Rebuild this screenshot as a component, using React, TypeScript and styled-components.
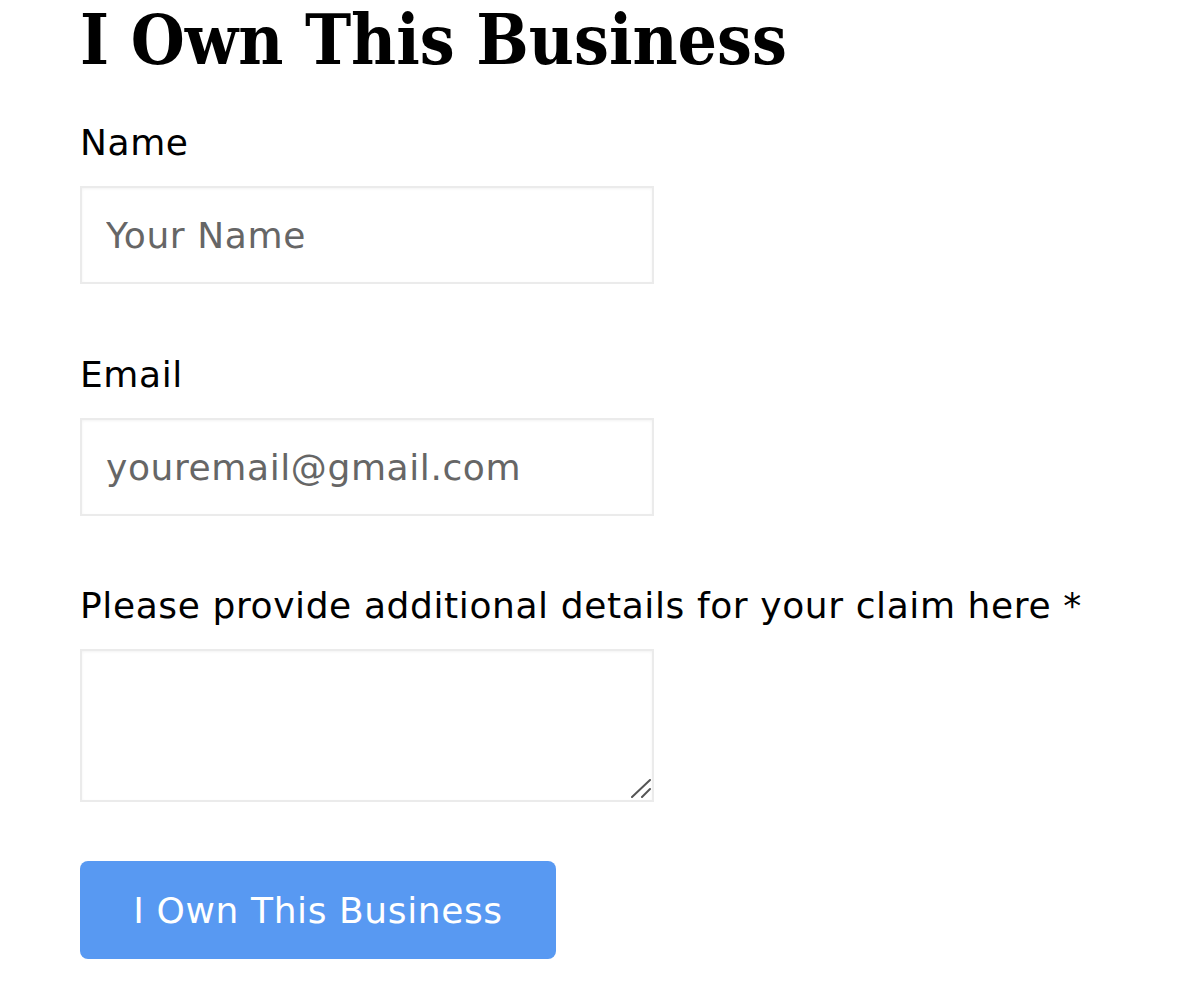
import React from 'react';
import styled, { createGlobalStyle } from 'styled-components';

const GlobalStyle = createGlobalStyle`
  body {
    margin: 0;
    background: #ffffff;
  }
`;

const bodyFont = `'DejaVu Sans', 'Noto Sans', sans-serif`;

const Page = styled.div`
  padding: 0 80px 40px;
  font-family: ${bodyFont};
  color: #000;
`;

const Title = styled.h1`
  margin: 0 0 39px;
  font-family: 'DejaVu Serif Condensed', 'Liberation Serif', serif;
  font-weight: 700;
  font-size: 69px;
  line-height: 80px;
`;

const Form = styled.form`
  display: flex;
  flex-direction: column;
  align-items: flex-start;
`;

const Field = styled.div<{ $gap?: number }>`
  display: flex;
  flex-direction: column;
  margin-bottom: ${(p) => p.$gap ?? 67}px;
`;

const Label = styled.label`
  font-size: 36px;
  line-height: 48px;
  letter-spacing: 0.6px;
  margin-bottom: 19px;
`;

const boxStyles = `
  box-sizing: border-box;
  width: 574px;
  border: 2px solid #ebebeb;
  background: #fff;
  box-shadow: inset 0 1px 3px rgba(0, 0, 0, 0.05);
  font-family: ${bodyFont};
  font-size: 36px;
  letter-spacing: 0.6px;
  color: #333;
  outline: none;
  &::placeholder {
    color: #666;
  }
`;

const Input = styled.input`
  ${boxStyles}
  height: 98px;
  padding: 0 24px;
`;

const AreaWrap = styled.div`
  position: relative;
  width: 574px;
  height: 153px;
`;

const TextArea = styled.textarea`
  ${boxStyles}
  display: block;
  height: 153px;
  padding: 16px 24px;
  resize: none;
`;

const Grip = styled.svg`
  position: absolute;
  right: 3px;
  bottom: 4px;
  pointer-events: none;
`;

const Submit = styled.button`
  margin-top: -8px;
  width: 476px;
  height: 98px;
  border: none;
  border-radius: 8px;
  background: #5899f2;
  color: #fff;
  font-family: ${bodyFont};
  font-size: 36px;
  letter-spacing: 0.6px;
  cursor: pointer;
`;

export default function App() {
  return (
    <>
      <GlobalStyle />
      <Page>
        <Title>I Own This Business</Title>
        <Form onSubmit={(e) => e.preventDefault()}>
          <Field>
            <Label htmlFor="name">Name</Label>
            <Input id="name" type="text" placeholder="Your Name" />
          </Field>
          <Field $gap={66}>
            <Label htmlFor="email">Email</Label>
            <Input id="email" type="email" placeholder="youremail@gmail.com" />
          </Field>
          <Field>
            <Label htmlFor="details">Please provide additional details for your claim here *</Label>
            <AreaWrap>
              <TextArea id="details" />
              <Grip width="20" height="19" viewBox="0 0 20 19">
                <line x1="1" y1="18" x2="19" y2="1" stroke="#555" strokeWidth="2" strokeLinecap="round" />
                <line x1="11" y1="18" x2="19" y2="10" stroke="#555" strokeWidth="2" strokeLinecap="round" />
              </Grip>
            </AreaWrap>
          </Field>
          <Submit type="submit">I Own This Business</Submit>
        </Form>
      </Page>
    </>
  );
}
